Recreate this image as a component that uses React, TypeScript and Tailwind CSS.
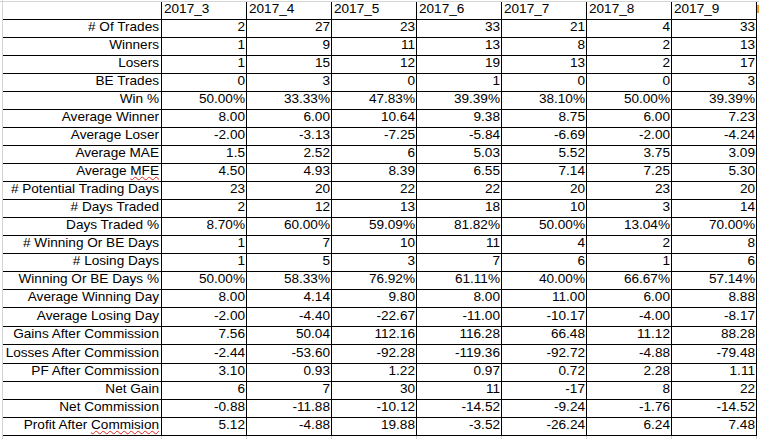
import React from "react";

const COLS = ["2017_3", "2017_4", "2017_5", "2017_6", "2017_7", "2017_8", "2017_9"];

// label, values, row height (px incl. bottom border)
const ROWS: { label: React.ReactNode; values: string[]; h?: number }[] = [
  { label: "# Of Trades", values: ["2", "27", "23", "33", "21", "4", "33"] },
  { label: "Winners", values: ["1", "9", "11", "13", "8", "2", "13"] },
  { label: "Losers", values: ["1", "15", "12", "19", "13", "2", "17"] },
  { label: "BE Trades", values: ["0", "3", "0", "1", "0", "0", "3"] },
  { label: "Win %", values: ["50.00%", "33.33%", "47.83%", "39.39%", "38.10%", "50.00%", "39.39%"] },
  { label: "Average Winner", values: ["8.00", "6.00", "10.64", "9.38", "8.75", "6.00", "7.23"] },
  { label: "Average Loser", values: ["-2.00", "-3.13", "-7.25", "-5.84", "-6.69", "-2.00", "-4.24"] },
  { label: "Average MAE", values: ["1.5", "2.52", "6", "5.03", "5.52", "3.75", "3.09"] },
  {
    label: (
      <span>
        Average <Squiggle>MFE</Squiggle>
      </span>
    ),
    values: ["4.50", "4.93", "8.39", "6.55", "7.14", "7.25", "5.30"],
  },
  { label: "# Potential Trading Days", values: ["23", "20", "22", "22", "20", "23", "20"] },
  { label: "# Days Traded", values: ["2", "12", "13", "18", "10", "3", "14"] },
  { label: "Days Traded %", values: ["8.70%", "60.00%", "59.09%", "81.82%", "50.00%", "13.04%", "70.00%"] },
  { label: "# Winning Or BE Days", values: ["1", "7", "10", "11", "4", "2", "8"] },
  { label: "# Losing Days", values: ["1", "5", "3", "7", "6", "1", "6"] },
  { label: "Winning Or BE Days %", values: ["50.00%", "58.33%", "76.92%", "61.11%", "40.00%", "66.67%", "57.14%"] },
  { label: "Average Winning Day", values: ["8.00", "4.14", "9.80", "8.00", "11.00", "6.00", "8.88"] },
  { label: "Average Losing Day", values: ["-2.00", "-4.40", "-22.67", "-11.00", "-10.17", "-4.00", "-8.17"], h: 19 },
  { label: "Gains After Commission", values: ["7.56", "50.04", "112.16", "116.28", "66.48", "11.12", "88.28"] },
  { label: "Losses After Commission", values: ["-2.44", "-53.60", "-92.28", "-119.36", "-92.72", "-4.88", "-79.48"], h: 19 },
  { label: "PF After Commission", values: ["3.10", "0.93", "1.22", "0.97", "0.72", "2.28", "1.11"] },
  { label: "Net Gain", values: ["6", "7", "30", "11", "-17", "8", "22"] },
  { label: "Net Commission", values: ["-0.88", "-11.88", "-10.12", "-14.52", "-9.24", "-1.76", "-14.52"] },
  {
    label: (
      <span>
        Profit After <Squiggle>Commision</Squiggle>
      </span>
    ),
    values: ["5.12", "-4.88", "19.88", "-3.52", "-26.24", "6.24", "7.48"],
  },
];

function Squiggle({ children }: { children: React.ReactNode }) {
  return (
    <span className="underline decoration-wavy decoration-[#e0201b] decoration-1 underline-offset-[1px]">
      {children}
    </span>
  );
}

export default function App() {
  return (
    <div
      className="w-[759px] h-[439px] overflow-hidden bg-white text-black text-[13.6px] leading-none"
      style={{ fontFamily: '"Liberation Sans", Arial, sans-serif' }}
    >
      {/* strip above the header row */}
      <div className="flex h-[2px] border-b border-[#d4d4d4]">
        <div className="w-[3px] border-r border-[#d4d4d4]" />
      </div>

      {/* header row */}
      <div className="flex h-[18px]">
        <div className="w-[3px] shrink-0 border-r border-[#d4d4d4]" />
        <div className="w-[159px] shrink-0 border-r border-b border-black" />
        {COLS.map((c) => (
          <div key={c} className="w-[85px] shrink-0 border-r border-b border-black flex items-end pl-[2px] pb-[3px]">
            {c}
          </div>
        ))}
        <div className="flex-1 relative">
          <div className="absolute left-[0px] top-[3px] w-[2px] h-[8px] bg-[#f0a030]" />
        </div>
      </div>

      {/* data rows */}
      {ROWS.map((r, i) => (
        <div key={i} className="flex" style={{ height: r.h ?? 18 }}>
          <div className="w-[3px] shrink-0 border-r border-[#d4d4d4]" />
          <div className="w-[159px] shrink-0 border-r border-b border-black flex items-end justify-end pr-[2px] pb-[3px] whitespace-nowrap">
            {r.label}
          </div>
          {r.values.map((v, j) => (
            <div key={j} className="w-[85px] shrink-0 border-r border-b border-black flex items-end justify-end pr-[1px] pb-[3px]">
              {v}
            </div>
          ))}
        </div>
      ))}

      {/* gridlines below the table */}
      <div className="flex h-[8px]">
        <div className="w-[3px] shrink-0 border-r border-[#d4d4d4]" />
        <div className="w-[159px] shrink-0 border-r border-[#d4d4d4]" />
        {COLS.map((c) => (
          <div key={c} className="w-[85px] shrink-0 border-r border-[#d4d4d4]" />
        ))}
      </div>
    </div>
  );
}
